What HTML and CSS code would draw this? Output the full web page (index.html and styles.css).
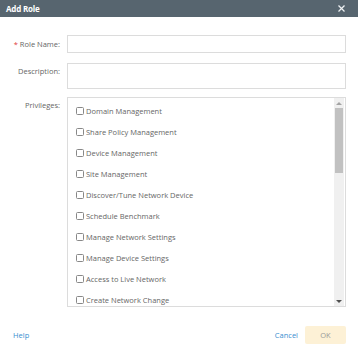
FILE: index.html
```html
<!DOCTYPE html>
<html lang="en">
<head>
    <meta charset="UTF-8">
    <title>Add Role</title>
    <link rel="stylesheet" href="styles.css">
</head>
<body>
    <div class="dialog">
        <div class="dialog-header">
            <span class="title">Add Role</span>
            <svg class="close" width="7" height="7" viewBox="0 0 7 7">
                <path d="M0.5 0.5 L6.5 6.5 M6.5 0.5 L0.5 6.5" stroke="#eef1f3" stroke-width="1.3"/>
            </svg>
        </div>

        <div class="dialog-body">
            <div class="row">
                <label class="label"><span class="req">*</span> Role Name:</label>
                <input type="text" class="field">
            </div>
            <div class="row">
                <label class="label label-top">Description:</label>
                <textarea class="field area"></textarea>
            </div>
            <div class="row">
                <label class="label label-top">Privileges:</label>
                <div class="priv-box">
                    <ul class="priv-list">
                        <li><span class="check"></span>Domain Management</li>
                        <li><span class="check"></span>Share Policy Management</li>
                        <li><span class="check"></span>Device Management</li>
                        <li><span class="check"></span>Site Management</li>
                        <li><span class="check"></span>Discover/Tune Network Device</li>
                        <li><span class="check"></span>Schedule Benchmark</li>
                        <li><span class="check"></span>Manage Network Settings</li>
                        <li><span class="check"></span>Manage Device Settings</li>
                        <li><span class="check"></span>Access to Live Network</li>
                        <li><span class="check"></span>Create Network Change</li>
                    </ul>
                    <div class="scrollbar">
                        <span class="arrow up"></span>
                        <div class="track"><div class="thumb"></div></div>
                        <span class="arrow down"></span>
                    </div>
                </div>
            </div>
        </div>

        <div class="dialog-footer">
            <a href="#" class="link">Help</a>
            <div class="actions">
                <a href="#" class="link">Cancel</a>
                <button class="btn-ok">OK</button>
            </div>
        </div>
    </div>
</body>
</html>
```

FILE: styles.css
```css
* {
    margin: 0;
    padding: 0;
    box-sizing: border-box;
    font-family: 'Open Sans', 'Noto Sans', sans-serif;
}

body {
    background: #fff;
    width: 358px;
    height: 362px;
}

.dialog {
    width: 358px;
    height: 362px;
    display: flex;
    flex-direction: column;
}

.dialog-header {
    height: 17px;
    background: #57656f;
    color: #fff;
    display: flex;
    align-items: center;
    justify-content: space-between;
    padding: 0 13px 0 6px;
}

.title {
    font-size: 8px;
    font-weight: 700;
    letter-spacing: -0.2px;
}

.dialog-body {
    padding: 18px 12px 0 0;
    display: flex;
    flex-direction: column;
    gap: 10px;
}

.row {
    display: flex;
    align-items: center;
}

.row:last-child {
    margin-top: -2px;
}

.label {
    width: 60px;
    margin-right: 7px;
    text-align: right;
    font-size: 7.5px;
    color: #666;
}

.req {
    color: #e0403a;
}

.label-top {
    align-self: flex-start;
    padding-top: 3px;
}

.field {
    width: 279px;
    height: 18px;
    border: 1px solid #dcdcdc;
    background: #fff;
    outline: none;
    resize: none;
}

.area {
    height: 26px;
}

.priv-box {
    width: 279px;
    height: 210px;
    border: 1px solid #dcdcdc;
    display: flex;
    overflow: hidden;
}

.priv-list {
    list-style: none;
    flex: 1;
    padding: 2px 0 0 8px;
}

.priv-list li {
    height: 21px;
    display: flex;
    align-items: center;
    font-size: 7.5px;
    color: #666;
}

.check {
    width: 8px;
    height: 8px;
    border: 1px solid #888;
    border-radius: 1.5px;
    margin-right: 2px;
    background: #fff;
}

.scrollbar {
    width: 10px;
    background: #f0f0f0;
    display: flex;
    flex-direction: column;
    align-items: center;
    margin-right: 1px;
}

.arrow {
    height: 10px;
    display: flex;
    align-items: center;
}

.arrow.up::before {
    content: "";
    border-left: 3px solid transparent;
    border-right: 3px solid transparent;
    border-bottom: 3px solid #a3a3a3;
}

.arrow.down::before {
    content: "";
    border-left: 3px solid transparent;
    border-right: 3px solid transparent;
    border-top: 3px solid #505050;
}

.track {
    flex: 1;
    width: 100%;
}

.thumb {
    height: 65px;
    background: #c1c1c1;
    margin: 0 1px;
}

.dialog-footer {
    margin-top: auto;
    height: 43px;
    display: flex;
    align-items: center;
    justify-content: space-between;
    padding: 0 12px 12px 13px;
}

.link {
    color: #3a8fd0;
    font-size: 7.5px;
    text-decoration: none;
}

.actions {
    display: flex;
    align-items: center;
    gap: 7px;
}

.btn-ok {
    width: 41px;
    height: 18px;
    background: #fdf1d6;
    border: none;
    border-radius: 2px;
    color: #999;
    font-size: 7.5px;
}
```
